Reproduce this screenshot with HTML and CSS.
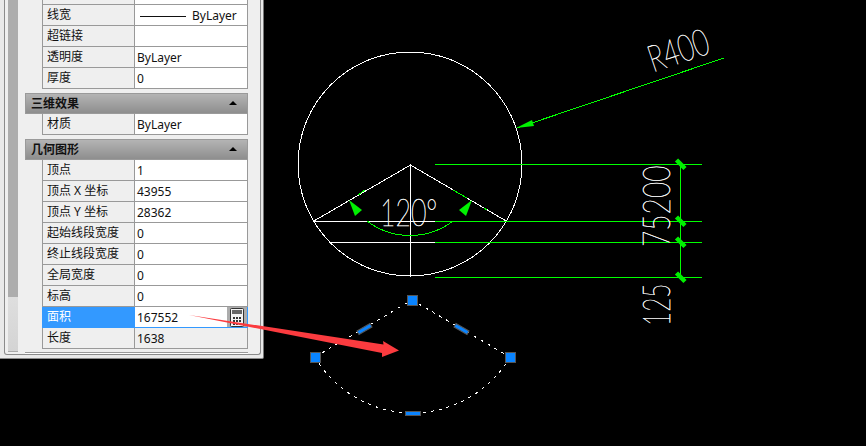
FILE: index.html
```html
<!DOCTYPE html>
<html lang="zh">
<head>
<meta charset="utf-8">
<title>特性</title>
<link rel="stylesheet" href="styles.css">
</head>
<body>
<div class="app">
  <aside class="panel">
    <div class="frame">
      <div class="scrollbar"><div class="thumb"></div></div>
      <div class="content">
        <div class="row cut"><div class="name"></div><div class="value"></div></div>
        <div class="row"><div class="name">线宽</div><div class="value"><span class="lineweight"></span>ByLayer</div></div>
        <div class="row"><div class="name">超链接</div><div class="value"></div></div>
        <div class="row"><div class="name">透明度</div><div class="value">ByLayer</div></div>
        <div class="row"><div class="name">厚度</div><div class="value">0</div></div>

        <div class="section">三维效果<span class="caret"></span></div>
        <div class="row"><div class="name">材质</div><div class="value">ByLayer</div></div>

        <div class="section">几何图形<span class="caret"></span></div>
        <div class="row"><div class="name">顶点</div><div class="value">1</div></div>
        <div class="row"><div class="name">顶点 X 坐标</div><div class="value">43955</div></div>
        <div class="row"><div class="name">顶点 Y 坐标</div><div class="value">28362</div></div>
        <div class="row"><div class="name">起始线段宽度</div><div class="value">0</div></div>
        <div class="row"><div class="name">终止线段宽度</div><div class="value">0</div></div>
        <div class="row"><div class="name">全局宽度</div><div class="value">0</div></div>
        <div class="row"><div class="name">标高</div><div class="value">0</div></div>
        <div class="row active">
          <div class="name">面积</div>
          <div class="value">167552
            <span class="calc">
              <svg width="14" height="19" viewBox="0 0 14 19">
                <rect x="0.5" y="0.5" width="13" height="18" rx="1" fill="#f4f4f4" stroke="#333"/>
                <rect x="2" y="2" width="10" height="4" fill="#666"/>
                <path d="M3 9h2v2H3zM6 9h2v2H6zM9 9h2v2H9zM3 12h2v2H3zM6 12h2v2H6zM9 12h2v2H9zM3 15h2v2H3zM6 15h2v2H6zM9 15h2v2H9z" fill="#333"/>
              </svg>
            </span>
          </div>
        </div>
        <div class="row readonly"><div class="name">长度</div><div class="value">1638</div></div>
        <div class="hscroll"></div>
      </div>
    </div>
  </aside>

  <svg class="drawing" width="866" height="446" viewBox="0 0 866 446">
    <!-- white geometry -->
    <g class="white">
      <circle cx="410" cy="164" r="112"/>
      <path d="M313 221.500L410.500 165L507 221.500"/>
      <path d="M410.500 165V277"/>
      <path d="M313 221.500H435M329 242.500H435"/>
    </g>

    <!-- green dimensions -->
    <g class="green">
      <path d="M435 164.500H702M435 221.500H702M435 242.500H702M435 277.500H702"/>
      <path d="M680.500 164V277"/>
      <path d="M367 221A71 71 0 0 0 453 221"/>
      <path d="M358 195L365 190M453 190L467 198M484 208L487 210"/>
      <path d="M517 128L724 58"/>
    </g>
    <g class="tick">
      <path d="M676.500 160L685 168.500M676.500 217L685 225.500M676.500 238L685 246.500M676.500 273L685 281.500"/>
    </g>
    <g class="arrowhead">
      <polygon points="349,200 362,210 355,216"/>
      <polygon points="472,200 459,210 466,216"/>
      <polygon points="516,128 532,120 534,126"/>
    </g>

    <!-- dimension text -->
    <text class="cad" transform="translate(653 72.500) rotate(-18.700) scale(0.72 1)">R400</text>
    <text class="cad" transform="translate(380 226) scale(0.72 1)">120°</text>
    <text class="cad" transform="translate(670 247) rotate(-90) scale(0.76 1)">75200</text>
    <text class="cad" transform="translate(670 326) rotate(-90) scale(0.66 1)">125</text>

    <!-- selected polyline -->
    <g class="dashed">
      <path d="M315 357L412 300L510 357"/>
      <path d="M315 357A113 113 0 0 0 510 357"/>
    </g>
    <g class="grip">
      <rect x="407.500" y="295.500" width="10" height="10"/>
      <rect x="310.500" y="352.500" width="10" height="10"/>
      <rect x="505.500" y="352.500" width="10" height="10"/>
      <rect x="405.500" y="411.500" width="15" height="4"/>
      <rect x="357" y="327" width="15" height="4" transform="rotate(-30 364.500 329)"/>
      <rect x="454" y="327" width="15" height="4" transform="rotate(30 461.500 329)"/>
    </g>

    <!-- red annotation arrow -->
    <polygon class="redarrow" points="189,315 383.500,344.500 383,341 399,350.500 382,357 382,353"/>
  </svg>
</div>
</body>
</html>
```

FILE: styles.css
```css
* { box-sizing: border-box; }

html, body { margin: 0; padding: 0; background: #000; }

.app {
  position: relative;
  width: 866px;
  height: 446px;
  background: #000;
  overflow: hidden;
}

/* properties palette */
.panel {
  width: 264px;
  height: 359px;
  padding: 0 2px 3px 4px;
  background: #e9e9e9;
  border-right: 1px solid #777;
  border-bottom: 1px solid #8a8a8a;
  border-bottom-right-radius: 2px;
}

.frame {
  display: flex;
  height: 355px;
  width: 257px;
  border: 1px solid #8b8b8b;
  border-top: 0;
  border-radius: 0 0 3px 3px;
  background: #efefef;
}

.scrollbar {
  flex: none;
  width: 10px;
  height: 352px;
  margin-left: 3px;
  background: linear-gradient(#e8e8e8 70%, #d4d4d4);
  border-bottom: 1px solid #aaa;
}

.thumb {
  height: 297px;
  background: #adadad;
}

.content {
  flex: none;
  width: 223px;
  margin-left: 7px;
  font: 12px/20px "Noto Sans", "Noto Sans CJK SC", sans-serif;
  color: #111;
}

.row {
  display: grid;
  grid-template-columns: 93px 113px;
  grid-template-rows: 20px;
  height: 21px;
  margin-left: 17px;
  border-bottom: 1px solid #999;
}

.row.cut { height: 5px; grid-template-rows: 4px; overflow: hidden; }

.name, .value { height: 100%; white-space: nowrap; overflow: hidden; }

.name {
  padding-left: 4px;
  background: #efefef;
  border-left: 1px solid #999;
  border-right: 1px solid #999;
}

.value {
  position: relative;
  padding-left: 2px;
  line-height: 22px;
  background: #fff;
  border-right: 1px solid #999;
}

.lineweight {
  display: inline-block;
  width: 46px;
  height: 1px;
  margin: 0 6px 0 3px;
  vertical-align: middle;
  background: #111;
}

.section {
  position: relative;
  height: 21px;
  margin-top: 4px;
  padding-left: 5px;
  line-height: 19px;
  font-weight: 700;
  color: #111;
  background: linear-gradient(#b4b4b4, #8e8e8e);
  border: 1px solid #9a9a9a;
}

.caret {
  position: absolute;
  top: 7px;
  right: 10px;
  width: 0;
  height: 0;
  border-left: 4px solid transparent;
  border-right: 4px solid transparent;
  border-bottom: 4px solid #000;
}

.row.active { position: relative; border-bottom-color: #3399ff; }

.row.active .name {
  color: #fff;
  background: #3399ff;
  border-color: #3399ff;
}

.row.active .value {
  border-color: #3399ff;
}

.calc {
  position: absolute;
  top: 0;
  right: 0;
  display: flex;
  align-items: center;
  justify-content: center;
  width: 20px;
  height: 20px;
  background: #acacac;
}

.calc svg { display: block; }

.row.readonly .value { background: #efefef; }

.hscroll {
  height: 2px;
  margin-top: 3px;
  background: linear-gradient(#9a9a9a 50%, #fff 50%);
}

/* drawing canvas */
.drawing {
  position: absolute;
  top: 0;
  left: 0;
  display: block;
  pointer-events: none;
}

.white path, .white circle {
  fill: none;
  stroke: #fff;
  stroke-width: 1;
  shape-rendering: crispEdges;
}

.green path {
  fill: none;
  stroke: #00ff00;
  stroke-width: 1;
  shape-rendering: crispEdges;
}

.tick path {
  fill: none;
  stroke: #00f000;
  stroke-width: 4.5;
}

.arrowhead polygon { fill: #00f000; }

.cad {
  font: 100 37px "Lato", "Liberation Sans", sans-serif;
  fill: #fff;
  stroke: #fff;
  stroke-width: 0.5;
}

.dashed path {
  fill: none;
  stroke: #fff;
  stroke-width: 1;
  stroke-dasharray: 3 5;
  shape-rendering: crispEdges;
}

.grip rect {
  fill: #0a84ff;
  stroke: #555;
  stroke-width: 1;
}

.redarrow { fill: #fb3b3f; }
```
